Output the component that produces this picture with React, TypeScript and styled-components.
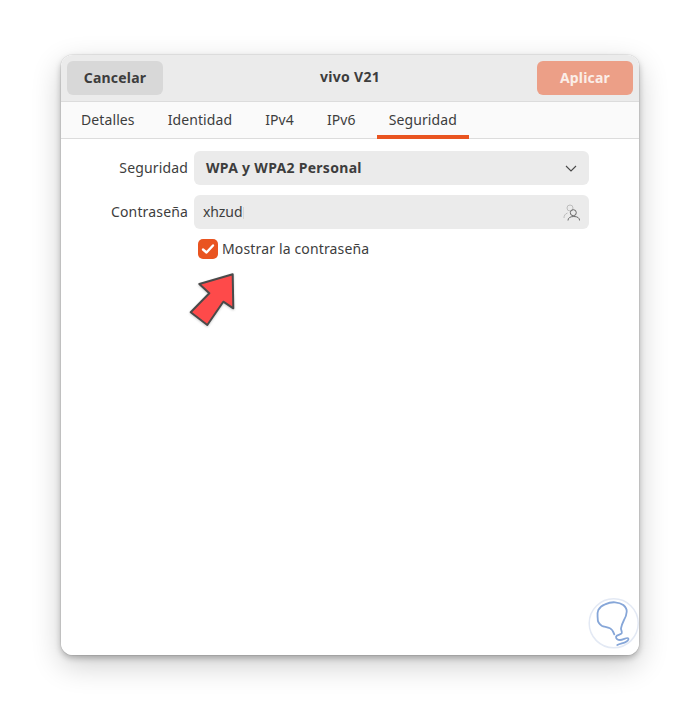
import React from "react";
import styled, { createGlobalStyle } from "styled-components";

const Global = createGlobalStyle`
  html, body { margin: 0; padding: 0; background: #fff; }
  body { font-family: "Noto Sans", "Open Sans", sans-serif; color: #3d3d3d; letter-spacing: 0.15px; }
`;

const Page = styled.div`
  position: relative;
  width: 700px;
  height: 722px;
  padding: 55px 61px 67px;
  box-sizing: border-box;
  overflow: hidden;
`;

const WindowShadow = styled.div`
  border-radius: 12px;
  box-shadow: 0 0 0 1px rgba(0,0,0,.06), 0 3px 6px rgba(0,0,0,.26), 0 10px 30px rgba(0,0,0,.2);
  width: 578px;
`;

const Window = styled.div`
  width: 578px;
  height: 600px;
  background: #fff;
  border-radius: 12px;
  overflow: hidden;
  display: flex;
  flex-direction: column;
`;

const Header = styled.header`
  height: 47px;
  flex: none;
  box-sizing: border-box;
  padding: 6px;
  display: flex;
  align-items: flex-start;
  justify-content: space-between;
  background: #ebebeb;
  border-bottom: 1px solid #dcdcdc;
`;

const HeaderButton = styled.button<{ $primary?: boolean }>`
  width: 96px;
  height: 34px;
  border: 0;
  border-radius: 6px;
  padding: 0 0 2px;
  font: 700 14px "Noto Sans", sans-serif;
  letter-spacing: 0.2px;
  color: ${(p) => (p.$primary ? "#fbeee8" : "#3d3d3d")};
  background: ${(p) => (p.$primary ? "#ec9f87" : "#d8d8d8")};
`;

const Title = styled.h1`
  margin: 0;
  line-height: 32px;
  font-size: 14px;
  font-weight: 700;
  letter-spacing: 0.3px;
  color: #3d3d3d;
`;

const TabBar = styled.nav`
  height: 37px;
  flex: none;
  box-sizing: border-box;
  display: flex;
  gap: 9px;
  padding-left: 8px;
  background: #fafafa;
  border-bottom: 1px solid #dcdcdc;
`;

const Tab = styled.div<{ $active?: boolean }>`
  height: 37px;
  box-sizing: border-box;
  padding: 0 12px;
  line-height: 35px;
  font-size: 14px;
  letter-spacing: 0.1px;
  color: #3d3d3d;
  border-bottom: 4px solid ${(p) => (p.$active ? "#e95420" : "transparent")};
`;

const Form = styled.main`
  display: grid;
  grid-template-columns: 127px 395px;
  column-gap: 6px;
  row-gap: 10px;
  padding-top: 12px;
  align-items: center;
`;

const Label = styled.label`
  font-size: 14px;
  text-align: right;
  color: #3d3d3d;
  padding-bottom: 2px;
`;

const Field = styled.div`
  height: 34px;
  border-radius: 6px;
  background: #ebebeb;
  display: flex;
  align-items: center;
  justify-content: space-between;
  box-sizing: border-box;
`;

const SelectField = styled(Field)`
  padding: 0 11px 0 12px;
  font-weight: 700;
  font-size: 14px;
  letter-spacing: 0.3px;
`;

const SelectText = styled.span`
  padding-bottom: 2px;
`;

const InputField = styled(Field)`
  padding: 0 9px;
  font-size: 14px;
  letter-spacing: 0;
`;

const InputText = styled.span`
  padding-bottom: 2px;
  letter-spacing: -0.1px;
`;

const Caret = styled.span`
  display: inline-block;
  width: 1px;
  height: 12px;
  margin-left: 1px;
  background: #d6d6d6;
  vertical-align: -2px;
`;

const CheckRow = styled.div`
  grid-column: 2;
  display: flex;
  align-items: flex-start;
  gap: 4px;
  padding-left: 4px;
  font-size: 14px;
`;

const CheckText = styled.span`
  line-height: 19px;
`;

const CheckBox = styled.span`
  width: 20px;
  height: 20px;
  border-radius: 5px;
  background: #e95420;
  display: flex;
  align-items: center;
  justify-content: center;
`;

const Arrow = styled.svg`
  position: absolute;
  left: 185px;
  top: 270px;
  filter: drop-shadow(0 1px 1px rgba(0,0,0,.2));
`;

const Mark = styled.svg`
  position: absolute;
  left: 586px;
  top: 596px;
`;

export default function App() {
  return (
    <Page>
      <Global />
      <WindowShadow>
        <Window>
          <Header>
            <HeaderButton>Cancelar</HeaderButton>
            <Title>vivo V21</Title>
            <HeaderButton $primary>Aplicar</HeaderButton>
          </Header>
          <TabBar>
            <Tab>Detalles</Tab>
            <Tab>Identidad</Tab>
            <Tab>IPv4</Tab>
            <Tab>IPv6</Tab>
            <Tab $active>Seguridad</Tab>
          </TabBar>
          <Form>
            <Label>Seguridad</Label>
            <SelectField>
              <SelectText>WPA y WPA2 Personal</SelectText>
              <svg width="14" height="14" viewBox="0 0 14 14" fill="none" stroke="#4a4a4a" strokeWidth="1.1">
                <path d="M2 5l5 5 5-5" />
              </svg>
            </SelectField>
            <Label>Contraseña</Label>
            <InputField>
              <InputText>xhzud<Caret /></InputText>
              <svg width="18" height="18" viewBox="0 0 18 18" fill="none" strokeWidth="1">
                <circle cx="8" cy="5" r="3" stroke="#bdbdbd" />
                <path d="M2 15c0-2.5 1-4 3.5-5" stroke="#bdbdbd" />
                <circle cx="11.3" cy="9.7" r="3" stroke="#6a6a6a" />
                <path d="M6 17.5c0-2.5 2-4 5.8-4s5.8 1.5 5.8 4" stroke="#6a6a6a" />
              </svg>
            </InputField>
            <CheckRow>
              <CheckBox>
                <svg width="14" height="14" viewBox="0 0 14 14" fill="none" stroke="#fff" strokeWidth="2.4" strokeLinecap="round" strokeLinejoin="round">
                  <path d="M2 7.5 5.5 10.5 12 3.5" />
                </svg>
              </CheckBox>
              <CheckText>Mostrar la contraseña</CheckText>
            </CheckRow>
          </Form>
        </Window>
      </WindowShadow>
      <Arrow width="54" height="60" viewBox="0 0 54 60">
        <path
          d="M47.7 4.3 14.3 14l10 9.3L5.7 42.3 22.3 55l16-23.3 10 6.6Z"
          fill="#fe4a4a"
          stroke="#4a4a4a"
          strokeWidth="2"
          strokeLinejoin="round"
        />
      </Arrow>
      <Mark width="56" height="56" viewBox="0 0 56 56" fill="none">
        <circle cx="27.7" cy="27.3" r="24.5" fill="#fff" fillOpacity=".85" stroke="#e3e9f4" strokeWidth="1.5" />
        <path
          d="M28.3 38.3C27 35 25.5 33 24 32.3 21 30.7 18 31 15.7 29.7 13 28 11.5 25.5 11.7 22.3 11.5 19 11 17 12.3 14 14 11 16 9.3 19 8.3 22.5 6.8 25.5 6 29 6.3 32 6.5 35 7.3 37.3 9 39.5 11 41 13 40.7 15.7 40.5 19 39.5 21.5 38 24 36.5 27 35.5 29.5 35 32.3 34.8 34 36.5 36 35.7 37.3 34.5 39 30.5 39 30 40.7 29.8 43 32 44 34 44 37 44 41 41 42.3 42.3 43 44 41 45.5 39 46.3 36.5 47.3 33.5 47.8 31.3 49"
          stroke="#86a6d8"
          strokeWidth="1.8"
          strokeLinecap="round"
          strokeLinejoin="round"
        />
      </Mark>
    </Page>
  );
}
